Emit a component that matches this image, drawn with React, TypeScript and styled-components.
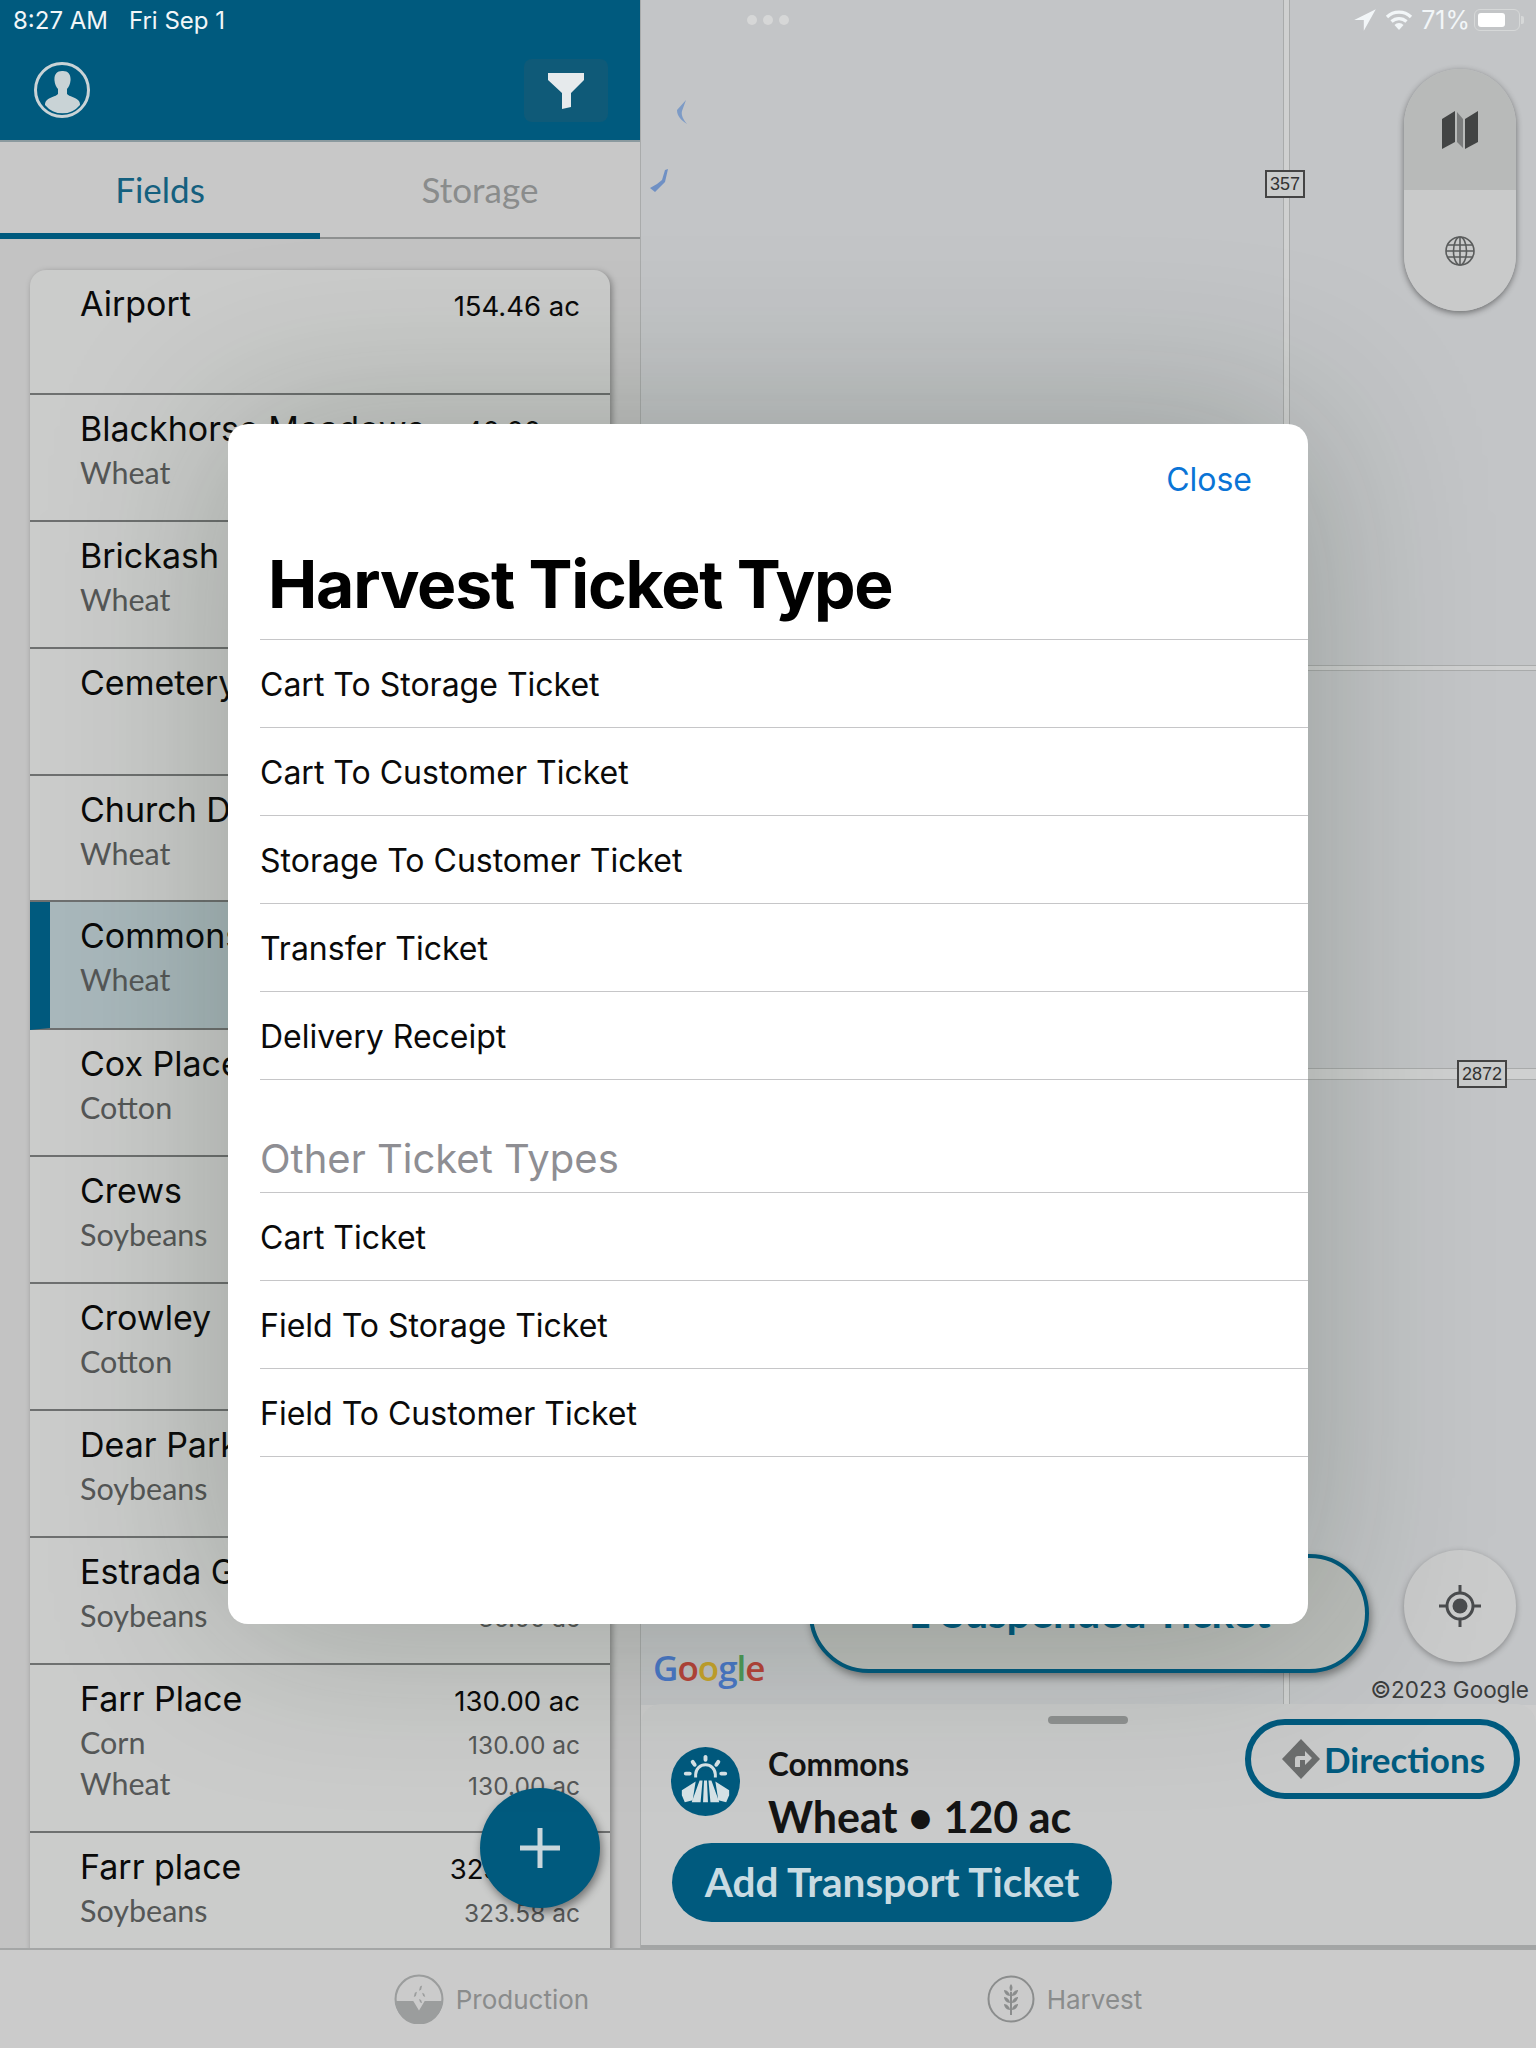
import React from 'react'
import styled, { createGlobalStyle } from 'styled-components'

const SF = `Inter, "Liberation Sans", sans-serif`
const AV = `Lato, "Open Sans", sans-serif`
const BRAND = '#005a7e'

const GlobalStyle = createGlobalStyle`
  html, body {
    margin: 0;
    padding: 0;
    background: #ccc;
  }
  * {
    box-sizing: border-box;
  }
`

const Screen = styled.div`
  position: relative;
  width: 1536px;
  height: 2048px;
  overflow: hidden;
  display: flex;
  flex-direction: column;
  background: #ccc;
  font-family: ${SF};
`

const Split = styled.div`
  flex: 1;
  min-height: 0;
  display: flex;
`

const SidePanel = styled.div`
  position: relative;
  width: 641px;
  display: flex;
  flex-direction: column;
  border-right: 1px solid #a9abab;
`

const Header = styled.div`
  height: 142px;
  padding: 61px 32px 0 33px;
  display: flex;
  align-items: flex-start;
  justify-content: space-between;
  background: ${BRAND};
  border-bottom: 2px solid #8b9a9f;
`

const FilterButton = styled.div`
  width: 84px;
  height: 63px;
  margin-top: -2px;
  display: flex;
  align-items: center;
  justify-content: center;
  border-radius: 8px;
  background: #0f5a78;
`

const Tabs = styled.div`
  height: 97px;
  display: flex;
  background: #c8c8c8;
  border-bottom: 2px solid #8e9090;
`

const Tab = styled.div<{ $active?: boolean }>`
  width: 320px;
  height: 97px;
  padding-top: 24px;
  text-align: center;
  font-family: ${AV};
  font-size: 35px;
  line-height: 46px;
  color: ${(p) => (p.$active ? '#14607f' : '#8a8c8c')};
  border-bottom: ${(p) => (p.$active ? `6px solid ${BRAND}` : 'none')};
`

const ListArea = styled.div`
  flex: 1;
  min-height: 0;
  overflow: hidden;
  padding: 31px 30px 0;
  background: #c3c3c3;
`

const Card = styled.div`
  border-radius: 16px 16px 0 0;
  background: #cbcccb;
  box-shadow: 2px 2px 6px rgba(0, 0, 0, 0.35);
`

const Row = styled.div<{ $selected?: boolean; $height: number }>`
  height: ${(p) => p.$height}px;
  padding: 10px 30px 0 ${(p) => (p.$selected ? 30 : 50)}px;
  border-bottom: 2px solid #6e7070;
  border-left: ${(p) => (p.$selected ? `20px solid ${BRAND}` : 'none')};
  background: ${(p) => (p.$selected ? '#a9b8bc' : 'transparent')};
`

const RowLine = styled.div`
  display: flex;
  justify-content: space-between;
  align-items: baseline;
`

const FieldName = styled.div`
  font-size: 34px;
  line-height: 47px;
  color: #0a0a0a;
  white-space: nowrap;
`

const FieldAcres = styled.div`
  font-size: 27.5px;
  color: #0a0a0a;
  white-space: nowrap;
`

const CropName = styled.div`
  font-family: ${AV};
  font-size: 30.5px;
  line-height: 41px;
  color: #555757;
`

const CropAcres = styled.div`
  font-size: 24.5px;
  color: #555757;
  white-space: nowrap;
`

const Fab = styled.div`
  position: absolute;
  left: 480px;
  top: 1788px;
  width: 120px;
  height: 120px;
  border-radius: 50%;
  background: ${BRAND};
  box-shadow: 2px 4px 10px rgba(0, 0, 0, 0.45);
  display: flex;
  align-items: center;
  justify-content: center;
`

const MapPane = styled.div`
  flex: 1;
  min-width: 0;
  display: flex;
  flex-direction: column;
`

const MapCanvas = styled.div`
  position: relative;
  flex: 1;
  min-height: 0;
  overflow: hidden;
  background: #c3c5c7;
`

const RoadV = styled.div<{ $x: number }>`
  position: absolute;
  top: 0;
  bottom: 0;
  left: ${(p) => p.$x}px;
  width: 7px;
  background: #cfd0d0;
  border-left: 1px solid #a9abab;
  border-right: 1px solid #a9abab;
`

const RoadH = styled.div<{ $y: number; $thick: number }>`
  position: absolute;
  left: 640px;
  right: 0;
  top: ${(p) => p.$y}px;
  height: ${(p) => p.$thick}px;
  background: #cfd0d0;
  border-top: 1px solid #a9abab;
  border-bottom: 1px solid #a9abab;
`

const Shield = styled.div<{ $x: number; $y: number }>`
  position: absolute;
  left: ${(p) => p.$x}px;
  top: ${(p) => p.$y}px;
  padding: 0 3px;
  height: 28px;
  line-height: 24px;
  font-family: "Liberation Sans", sans-serif;
  font-size: 18px;
  color: #333;
  background: #c9cbcb;
  border: 2px solid #444;
`

const Water = styled.svg<{ $x: number; $y: number }>`
  position: absolute;
  left: ${(p) => p.$x}px;
  top: ${(p) => p.$y}px;
`

const LayerPill = styled.div`
  position: absolute;
  left: 763px;
  top: 69px;
  width: 112px;
  height: 242px;
  border-radius: 56px;
  overflow: hidden;
  box-shadow: 0 2px 6px rgba(0, 0, 0, 0.45);
  display: flex;
  flex-direction: column;
`

const LayerOption = styled.div<{ $active?: boolean }>`
  flex: 1;
  display: flex;
  align-items: center;
  justify-content: center;
  background: ${(p) => (p.$active ? '#b8bab9' : '#c9caca')};
`

const LocateButton = styled.div`
  position: absolute;
  left: 763px;
  top: 1550px;
  width: 112px;
  height: 112px;
  border-radius: 50%;
  background: #cacbcb;
  box-shadow: 0 2px 6px rgba(0, 0, 0, 0.3);
  display: flex;
  align-items: center;
  justify-content: center;
`

const SuspendedButton = styled.div`
  position: absolute;
  left: 168px;
  top: 1554px;
  width: 560px;
  height: 119px;
  padding-bottom: 3px;
  border-radius: 60px;
  border: 4px solid ${BRAND};
  background: #bcbebb;
  box-shadow: 2px 4px 8px rgba(0, 0, 0, 0.4);
  display: flex;
  align-items: center;
  justify-content: center;
  font-family: ${AV};
  font-weight: 700;
  font-size: 42px;
  color: ${BRAND};
`

const GoogleMark = styled.div`
  position: absolute;
  left: 12px;
  top: 1646px;
  font-family: "Open Sans", sans-serif;
  font-weight: 600;
  font-size: 35px;
  line-height: 44px;
  letter-spacing: -1px;
`

const GoogleLetter = styled.span<{ $color: string }>`
  color: ${(p) => p.$color};
`

const Copyright = styled.div`
  position: absolute;
  right: 7px;
  top: 1676px;
  font-size: 22.5px;
  line-height: 28px;
  color: #3b3d3d;
  white-space: nowrap;
`

const BottomSheet = styled.div`
  position: relative;
  height: 244px;
  margin-top: -1px;
  padding: 0 16px 0 31px;
  display: flex;
  justify-content: space-between;
  background: #c9caca;
  border-radius: 20px 20px 0 0;
  border-bottom: 3px solid #a3a5a5;
`

const Grabber = styled.div`
  position: absolute;
  left: 407px;
  top: 12px;
  width: 80px;
  height: 8px;
  border-radius: 4px;
  background: #8f9191;
`

const SheetInfo = styled.div`
  display: flex;
  flex-direction: column;
`

const SiteLine = styled.div`
  display: flex;
  padding-top: 40px;
  gap: 28px;
`

const LogoSvg = styled.svg`
  flex-shrink: 0;
  margin-top: 3px;
  margin-left: -1px;
`

const SiteText = styled.div`
  display: flex;
  flex-direction: column;
`

const SiteName = styled.div`
  font-family: ${AV};
  font-weight: 700;
  font-size: 31.5px;
  line-height: 40px;
  color: #141414;
`

const SiteCrop = styled.div`
  font-family: ${AV};
  font-weight: 700;
  font-size: 43px;
  line-height: 52px;
  margin-top: 7px;
  color: #141414;
`

const PrimaryButton = styled.div`
  width: 440px;
  height: 79px;
  border-radius: 40px;
  background: ${BRAND};
  color: #c9dbe2;
  font-family: ${AV};
  font-weight: 700;
  font-size: 40.5px;
  line-height: 77px;
  text-align: center;
`

const DirectionsButton = styled.div`
  margin-top: 15px;
  width: 275px;
  height: 80px;
  border-radius: 40px;
  border: 6px solid ${BRAND};
  display: flex;
  align-items: center;
  justify-content: center;
  gap: 2px;
  font-family: ${AV};
  font-weight: 700;
  font-size: 35px;
  color: ${BRAND};
`

const TabBar = styled.div`
  height: 100px;
  padding-left: 205px;
  display: grid;
  grid-template-columns: 573px 573px;
  background: #cbcbcb;
  border-top: 2px solid #a4a6a6;
`

const BarItem = styled.div`
  display: flex;
  align-items: center;
  justify-content: center;
  gap: 12px;
  font-size: 26px;
  color: #8a8c8c;
`

const StatusBar = styled.div`
  position: absolute;
  left: 0;
  right: 0;
  top: 0;
  height: 40px;
  padding: 0 16px 0 13px;
  display: flex;
  align-items: center;
  justify-content: space-between;
  color: #f2f6f8;
  font-size: 24px;
`

const StatusClock = styled.div`
  display: flex;
  gap: 21px;
`

const DotsWrap = styled.div`
  position: absolute;
  left: 747px;
  top: 15px;
  display: flex;
  gap: 6px;
`

const Dot = styled.div`
  width: 10px;
  height: 10px;
  border-radius: 50%;
  background: #d6d7d7;
`

const StatusRight = styled.div`
  display: flex;
  align-items: center;
  gap: 8px;
`

const BatteryLevel = styled.span`
  font-size: 25px;
  margin-right: -4px;
`

const Battery = styled.div`
  position: relative;
  width: 46px;
  height: 22px;
  padding: 3px;
  border: 1.5px solid #d6d8d8;
  border-radius: 6px;

  &::after {
    content: '';
    position: absolute;
    right: -5px;
    top: 6px;
    width: 3px;
    height: 8px;
    border-radius: 0 2px 2px 0;
    background: #d6d8d8;
  }
`

const BatteryFill = styled.div`
  width: 71%;
  height: 100%;
  border-radius: 3px;
  background: #fff;
`

const Modal = styled.div`
  position: absolute;
  left: 228px;
  top: 424px;
  width: 1080px;
  height: 1200px;
  padding: 36px 0 0 32px;
  background: #fff;
  border-radius: 20px;
  box-shadow: 0 0 180px rgba(20, 40, 20, 0.26);
`

const CloseLink = styled.div`
  padding-right: 56px;
  text-align: right;
  font-size: 32px;
  line-height: 40px;
  color: #0a74d6;
`

const ModalTitle = styled.h1`
  margin: 44px 0 0;
  padding-left: 8px;
  height: 95px;
  font-size: 66px;
  letter-spacing: -1.2px;
  line-height: 80px;
  font-weight: 700;
  color: #000;
`

const ListDivider = styled.div`
  border-top: 1px solid #c6c6c8;
`

const Option = styled.div`
  height: 88px;
  line-height: 90px;
  font-size: 32px;
  color: #0a0a0a;
  border-bottom: 1px solid #c6c6c8;
`

const SectionTitle = styled.div`
  height: 113px;
  padding-top: 54px;
  font-size: 40px;
  line-height: 50px;
  color: #8e8e93;
  border-bottom: 1px solid #c6c6c8;
`

type Field = { name: string; acres: string; crops: [string, string][]; height: number; selected?: boolean }

const fields: Field[] = [
  { name: 'Airport', acres: '154.46 ac', crops: [], height: 125 },
  { name: 'Blackhorse Meadows', acres: '40.00 ac', crops: [['Wheat', '40.00 ac']], height: 127 },
  { name: 'Brickash', acres: '88.00 ac', crops: [['Wheat', '88.00 ac']], height: 127 },
  { name: 'Cemetery', acres: '72.00 ac', crops: [], height: 127 },
  { name: 'Church Dr', acres: '64.00 ac', crops: [['Wheat', '64.00 ac']], height: 126 },
  { name: 'Commons', acres: '120.00 ac', crops: [['Wheat', '120.00 ac']], height: 128, selected: true },
  { name: 'Cox Place', acres: '95.00 ac', crops: [['Cotton', '95.00 ac']], height: 127 },
  { name: 'Crews', acres: '110.00 ac', crops: [['Soybeans', '110.00 ac']], height: 127 },
  { name: 'Crowley', acres: '76.00 ac', crops: [['Cotton', '76.00 ac']], height: 127 },
  { name: 'Dear Park', acres: '58.00 ac', crops: [['Soybeans', '58.00 ac']], height: 127 },
  { name: 'Estrada Gin', acres: '36.00 ac', crops: [['Soybeans', '36.00 ac']], height: 127 },
  {
    name: 'Farr Place',
    acres: '130.00 ac',
    crops: [
      ['Corn', '130.00 ac'],
      ['Wheat', '130.00 ac'],
    ],
    height: 168,
  },
  { name: 'Farr place', acres: '323.58 ac', crops: [['Soybeans', '323.58 ac']], height: 127 },
]

const harvestTypes = [
  'Cart To Storage Ticket',
  'Cart To Customer Ticket',
  'Storage To Customer Ticket',
  'Transfer Ticket',
  'Delivery Receipt',
]

const otherTypes = ['Cart Ticket', 'Field To Storage Ticket', 'Field To Customer Ticket']

const ProfileIcon = () => (
  <svg width="58" height="58" viewBox="0 0 58 58">
    <circle cx="29" cy="29" r="26.500" fill="none" stroke="#c9d3d6" strokeWidth="3" />
    <path
      d="M29 10c-5.500 0-8 4-7.500 9.500.3 3.500 1.500 6.500 3.500 8.500v5c-2 2.500-9 3.500-11.500 6.500-1.500 2-1.500 3-1.500 4.500a22.500 22.500 0 0 0 35 0c0-1.500 0-2.500-1.500-4.500-2.500-3-9.500-4-11.500-6.500v-5c2-2 3.200-5 3.500-8.500.5-5.500-2-9.500-7.500-9.500z"
      fill="#c9d3d6"
    />
  </svg>
)

const FunnelIcon = () => (
  <svg width="36" height="36" viewBox="0 0 36 36">
    <path d="M0 0h36v7L23 20v14l-9 2V20L0 7z" fill="#e6eaec" />
  </svg>
)

const MapIcon = () => (
  <svg width="40" height="40" viewBox="0 0 40 40">
    <path d="M2 9L15 1v31L2 39z" fill="#424444" />
    <path d="M25 9L38 1v31l-13 7z" fill="#424444" />
    <path d="M17 2l6 7v29l-6-6z" fill="#7b7d7d" />
  </svg>
)

const GlobeIcon = () => (
  <svg width="32" height="32" viewBox="0 0 32 32" fill="none" stroke="#5a5c5c" strokeWidth="1.6">
    <circle cx="16" cy="16" r="14" />
    <ellipse cx="16" cy="16" rx="6.500" ry="14" />
    <path d="M16 2v28M3.500 10h25M2 16h28M3.500 22h25" />
  </svg>
)

const LocateIcon = () => (
  <svg width="44" height="44" viewBox="0 0 44 44" fill="none" stroke="#4a4c4e" strokeWidth="3">
    <circle cx="22" cy="22" r="13" />
    <circle cx="22" cy="22" r="7.500" fill="#4a4c4e" stroke="none" />
    <path d="M22 1v8M22 35v8M1 22h8M35 22h8" />
  </svg>
)

const FieldLogo = () => (
  <LogoSvg width="69" height="69" viewBox="0 0 70 70">
    <circle cx="35" cy="35" r="35" fill={BRAND} />
    <path d="M25 31v-3a10 10 0 0 1 20 0v3" fill="none" stroke="#d5e2e6" strokeWidth="3" />
    <path
      d="M35 10v3M22 15l2 3M48 15l-2 3M15 27h4M51 27h4"
      stroke="#d5e2e6"
      strokeWidth="4"
      strokeLinecap="round"
    />
    <path
      d="M29 34h3l-2 22h-9zM38 34h3l8 22h-9zM33.500 34h3l1 22h-5zM25 35L11 44v5l3 7 8-2zM45 35l14 9v5l-3 7-8-2z"
      fill="#d5e2e6"
    />
  </LogoSvg>
)

const DirectionsIcon = () => (
  <svg width="42" height="42" viewBox="0 0 42 42">
    <path d="M21 1l19 20-19 20L2 21z" fill="#6b6d6d" />
    <path d="M15 29v-8a3 3 0 0 1 3-3h7v-5l7 7-7 7v-5h-5v7z" fill="#c9caca" />
  </svg>
)

const ProductionIcon = () => (
  <svg width="50" height="50" viewBox="0 0 48 48">
    <circle cx="24" cy="24" r="22.500" fill="none" stroke="#9b9d9d" strokeWidth="2" />
    <path d="M1.500 26h17l5.500 9 5.500-9h17a22.500 22.500 0 0 1-45 0z" fill="#9b9d9d" />
    <path
      d="M25 12l2-1-1 4-2 1zM20 18l2-1-1 4-2 1zM27 18l2 1 1 3-2-1zM24 24l2 1 1 3-2-1z"
      fill="#9b9d9d"
    />
  </svg>
)

const WheatIcon = () => (
  <svg width="48" height="48" viewBox="0 0 48 48">
    <circle cx="24" cy="24" r="22.500" fill="none" stroke="#8b8d8d" strokeWidth="2" />
    <path
      d="M24 9c2 2 2 5 0 8-2-3-2-6 0-8zM17 15c3 0 6 3 6 6-3 0-6-3-6-6zM31 15c-3 0-6 3-6 6 3 0 6-3 6-6zM17 22c3 0 6 3 6 6-3 0-6-3-6-6zM31 22c-3 0-6 3-6 6 3 0 6-3 6-6zM17 29c3 0 6 3 6 6-3 0-6-3-6-6zM31 29c-3 0-6 3-6 6 3 0 6-3 6-6z"
      fill="#8b8d8d"
    />
    <path d="M24 17v23" stroke="#8b8d8d" strokeWidth="2" />
  </svg>
)

const App: React.FC = () => {
  return (
    <Screen>
      <GlobalStyle />
      <Split>
        <SidePanel>
          <Header>
            <ProfileIcon />
            <FilterButton>
              <FunnelIcon />
            </FilterButton>
          </Header>
          <Tabs>
            <Tab $active>Fields</Tab>
            <Tab>Storage</Tab>
          </Tabs>
          <ListArea>
            <Card>
              {fields.map((field) => (
                <Row key={field.name} $height={field.height} $selected={field.selected}>
                  <RowLine>
                    <FieldName>{field.name}</FieldName>
                    <FieldAcres>{field.acres}</FieldAcres>
                  </RowLine>
                  {field.crops.map(([crop, acres]) => (
                    <RowLine key={crop}>
                      <CropName>{crop}</CropName>
                      <CropAcres>{acres}</CropAcres>
                    </RowLine>
                  ))}
                </Row>
              ))}
            </Card>
          </ListArea>
          <Fab>
            <svg width="40" height="40" viewBox="0 0 40 40">
              <path d="M17.500 0h5v17.500h17.500v5H22.500v17.500h-5V22.500H0v-5h17.500z" fill="#c9d6db" />
            </svg>
          </Fab>
        </SidePanel>
        <MapPane>
          <MapCanvas>
            <RoadV $x={642} />
            <RoadH $y={665} $thick={6} />
            <RoadH $y={1068} $thick={12} />
            <Shield $x={624} $y={170}>357</Shield>
            <Shield $x={816} $y={1060}>2872</Shield>
            <Water $x={34} $y={100} width="14" height="24" viewBox="0 0 14 24">
              <path d="M11 0L2 10c0 6 4 10 10 14-4-5-6-9-5-13z" fill="#7d9bc6" />
            </Water>
            <Water $x={8} $y={168} width="20" height="24" viewBox="0 0 20 24">
              <path d="M19 1l-3 13-10 10-5-4 7-4 5-4 3-10z" fill="#6f90c4" />
            </Water>
            <LayerPill>
              <LayerOption $active>
                <MapIcon />
              </LayerOption>
              <LayerOption>
                <GlobeIcon />
              </LayerOption>
            </LayerPill>
            <SuspendedButton>1 Suspended Ticket</SuspendedButton>
            <LocateButton>
              <LocateIcon />
            </LocateButton>
            <GoogleMark>
              <GoogleLetter $color="#4a78c8">G</GoogleLetter>
              <GoogleLetter $color="#b8443a">o</GoogleLetter>
              <GoogleLetter $color="#c9a52c">o</GoogleLetter>
              <GoogleLetter $color="#4a78c8">g</GoogleLetter>
              <GoogleLetter $color="#4f9a58">l</GoogleLetter>
              <GoogleLetter $color="#b8443a">e</GoogleLetter>
            </GoogleMark>
            <Copyright>©2023 Google</Copyright>
          </MapCanvas>
          <BottomSheet>
            <Grabber />
            <SheetInfo>
              <SiteLine>
                <FieldLogo />
                <SiteText>
                  <SiteName>Commons</SiteName>
                  <SiteCrop>Wheat • 120 ac</SiteCrop>
                </SiteText>
              </SiteLine>
              <PrimaryButton>Add Transport Ticket</PrimaryButton>
            </SheetInfo>
            <DirectionsButton>
              <DirectionsIcon />
              Directions
            </DirectionsButton>
          </BottomSheet>
        </MapPane>
      </Split>
      <TabBar>
        <BarItem>
          <ProductionIcon />
          Production
        </BarItem>
        <BarItem>
          <WheatIcon />
          Harvest
        </BarItem>
      </TabBar>
      <Modal>
        <CloseLink>Close</CloseLink>
        <ModalTitle>Harvest Ticket Type</ModalTitle>
        <ListDivider />
        {harvestTypes.map((label) => (
          <Option key={label}>{label}</Option>
        ))}
        <SectionTitle>Other Ticket Types</SectionTitle>
        {otherTypes.map((label) => (
          <Option key={label}>{label}</Option>
        ))}
      </Modal>
      <StatusBar>
        <StatusClock>
          <span>8:27 AM</span>
          <span>Fri Sep 1</span>
        </StatusClock>
        <DotsWrap>
          <Dot />
          <Dot />
          <Dot />
        </DotsWrap>
        <StatusRight>
          <svg width="24" height="24" viewBox="0 0 20 20">
            <path d="M19 1L1 10h8v9z" fill="#f2f6f8" />
          </svg>
          <svg width="28" height="22" viewBox="0 0 28 22" fill="none" stroke="#f2f6f8" strokeWidth="3.200">
            <path d="M2 8a17 17 0 0 1 24 0M6.500 12.500a11 11 0 0 1 15 0" />
            <path d="M14 21l-4.500-5a6 6 0 0 1 9 0z" fill="#f2f6f8" stroke="none" />
          </svg>
          <BatteryLevel>71%</BatteryLevel>
          <Battery>
            <BatteryFill />
          </Battery>
        </StatusRight>
      </StatusBar>
    </Screen>
  )
}

export default App
